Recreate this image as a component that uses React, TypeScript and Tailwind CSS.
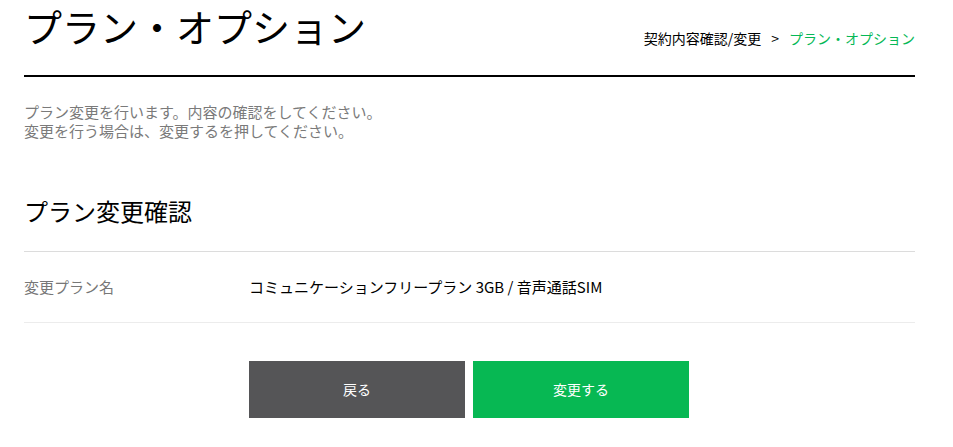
export default function App() {
  const jp = { fontFamily: '"Noto Sans CJK JP", "Noto Sans", sans-serif' }
  return (
    <div className="min-h-[447px] bg-white" style={jp}>
      <div className="ml-[24px] w-[891px]">
        <header className="flex h-[77px] items-start justify-between border-b-2 border-black">
          <h1 className="text-[38px] font-normal leading-[52px] text-black">
            プラン・オプション
          </h1>
          <nav className="mt-[28px] flex items-center text-[14px] leading-[20px]">
            <span className="text-black">契約内容確認/変更</span>
            <span className="mx-[10px] text-black">&gt;</span>
            <span className="text-[#06b856]">プラン・オプション</span>
          </nav>
        </header>

        <p className="mt-[25px] text-[15px] leading-[19px] text-[#7a7a7a]">
          プラン変更を行います。内容の確認をしてください。
          <br />
          変更を行う場合は、変更するを押してください。
        </p>

        <h2 className="mt-[54px] text-[24px] font-normal leading-[34px] text-black">
          プラン変更確認
        </h2>

        <div className="mt-[23px] border-t border-[#dcdcdc]">
          <div className="flex h-[71px] items-center border-b border-[#ececec] text-[15px]">
            <span className="w-[225px] text-[#777]">変更プラン名</span>
            <span className="text-black">コミュニケーションフリープラン 3GB / 音声通話SIM</span>
          </div>
        </div>

        <div className="mt-[38px] flex gap-[8px] pl-[225px]">
          <button className="h-[57px] w-[216px] bg-[#555557] text-[14px] text-white">戻る</button>
          <button className="h-[57px] w-[216px] bg-[#07b853] text-[14px] text-white">変更する</button>
        </div>
      </div>
    </div>
  )
}
